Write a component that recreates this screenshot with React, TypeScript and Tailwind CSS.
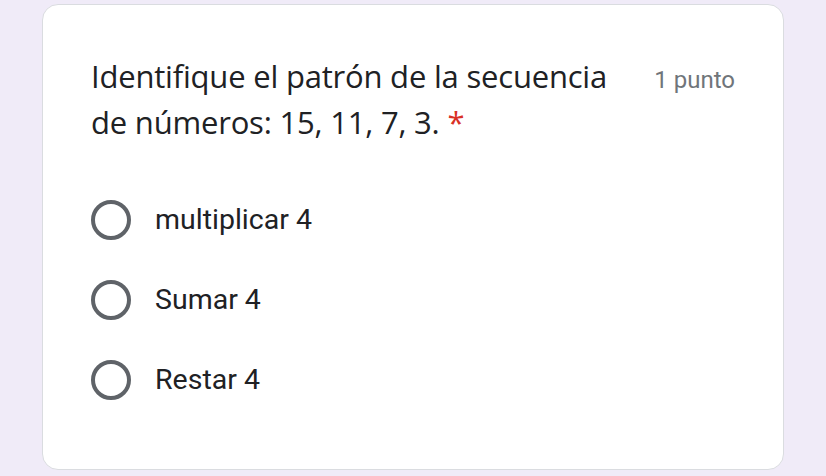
import React from 'react';

const options = ['multiplicar 4', 'Sumar 4', 'Restar 4'];

const Radio: React.FC = () => (
  <div className="w-[40px] h-[40px] rounded-full border-[4px] border-[#5f6368] shrink-0" />
);

const App: React.FC = () => {
  return (
    <div className="w-[826px] h-[476px] bg-[#f0ebf8] pt-[4px] px-[42px] overflow-hidden">
      <div className="h-[466px] bg-white rounded-[16px] border border-[#dadce0] pl-[48px] pr-[48px] pt-[48px]">
        {/* Question header */}
        <div className="flex items-start justify-between">
          <h2 className="text-[31px] leading-[46px] tracking-[-0.2px] text-[#202124] max-w-[545px]" style={{ fontFamily: '"Open Sans", sans-serif' }}>
            Identifique el patrón de la secuencia de números: 15, 11, 7, 3.{' '}
            <span className="text-[#d93025]">*</span>
          </h2>
          <div className="pt-[4px] text-[24px] leading-[46px] text-[#70757a] whitespace-nowrap" style={{ fontFamily: 'Roboto, sans-serif' }}>
            1 punto
          </div>
        </div>

        {/* Options */}
        <div className="mt-[55px] flex flex-col gap-[40px]">
          {options.map((opt) => (
            <div key={opt} className="flex items-center gap-[24px]">
              <Radio />
              <span className="text-[28.5px] leading-[40px] text-[#202124]" style={{ fontFamily: 'Roboto, sans-serif' }}>
                {opt}
              </span>
            </div>
          ))}
        </div>
      </div>
    </div>
  );
};

export default App;
